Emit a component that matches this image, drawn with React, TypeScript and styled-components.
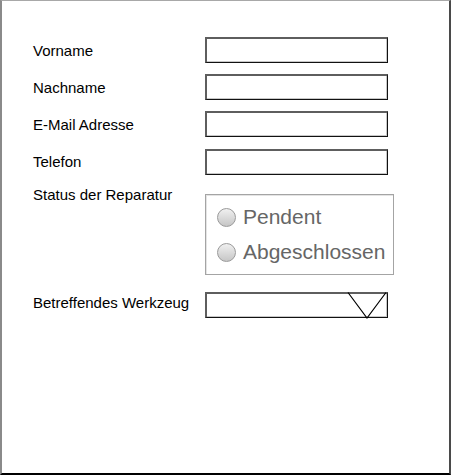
import React from "react";
import styled, { createGlobalStyle } from "styled-components";

const Global = createGlobalStyle`
  html, body { margin: 0; padding: 0; background: #fff; }
  body { font-family: "Liberation Sans", Arial, sans-serif; }
  * { box-sizing: border-box; }
`;

const Frame = styled.div`
  width: 451px;
  height: 475px;
  border-top: 1px solid #a8a8a8;
  border-left: 2px solid #8a8a8a;
  border-right: 2px solid #4a4a4a;
  border-bottom: 2px solid #000;
  padding: 36px 0 0 31px;
`;

const Form = styled.div`
  display: grid;
  grid-template-columns: 172px 183px;
  row-gap: 11px;
  align-items: center;
`;

const Label = styled.div<{ $top?: boolean }>`
  font-size: 15px;
  line-height: 17px;
  color: #000;
  align-self: ${(p) => (p.$top ? "start" : "center")};
`;

const TextBox = styled.div<{ $mt?: number }>`
  position: relative;
  height: 26px;
  margin-top: ${(p) => p.$mt ?? 0}px;
  border-style: solid;
  border-width: 2px 1px 1px 2px;
  border-color: #5e5e5e #111 #111 #5e5e5e;
  box-shadow: inset -1px -1px 0 #c8c8c8;
  background: #fff;
`;

const RadioGroup = styled.div`
  width: 189px;
  height: 81px;
  margin-top: 8px;
  border: 1px solid #a4a4a4;
  box-shadow: inset 1px 1px 0 #e4e4e4;
  padding: 10px 0 0 11px;
  display: flex;
  flex-direction: column;
  gap: 11px;
`;

const RadioRow = styled.div`
  display: flex;
  align-items: center;
  gap: 7px;
  height: 24px;
`;

const RadioDot = styled.span`
  width: 19px;
  height: 19px;
  border-radius: 50%;
  border: 1px solid #9a9a9a;
  background: linear-gradient(#f0f0f0, #c6c6c6);
  flex: none;
`;

const RadioText = styled.span`
  font-size: 21px;
  color: #666;
  line-height: 24px;
`;

const Arrow = styled.svg`
  position: absolute;
  right: 0;
  top: -2px;
`;

export default function App() {
  return (
    <>
      <Global />
      <Frame>
        <Form>
          <Label>Vorname</Label>
          <TextBox />
          <Label>Nachname</Label>
          <TextBox />
          <Label>E-Mail Adresse</Label>
          <TextBox />
          <Label>Telefon</Label>
          <TextBox $mt={1} />
          <Label $top>Status der Reparatur</Label>
          <RadioGroup>
            <RadioRow>
              <RadioDot />
              <RadioText>Pendent</RadioText>
            </RadioRow>
            <RadioRow>
              <RadioDot />
              <RadioText>Abgeschlossen</RadioText>
            </RadioRow>
          </RadioGroup>
          <Label>Betreffendes Werkzeug</Label>
          <TextBox $mt={6}>
            <Arrow width="40" height="27" viewBox="0 0 40 27">
              <polyline points="1,0.5 20,26 39,0.5" fill="none" stroke="#000" strokeWidth="1.2" />
            </Arrow>
          </TextBox>
        </Form>
      </Frame>
    </>
  );
}
